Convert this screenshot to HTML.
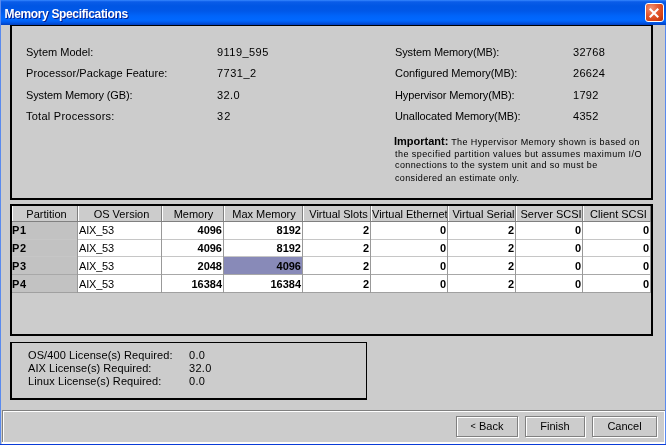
<!DOCTYPE html>
<html><head><meta charset="utf-8">
<style>
*{margin:0;padding:0;box-sizing:border-box}
html,body{width:666px;height:445px;overflow:hidden;background:#cccccc;position:relative;font-family:"Liberation Sans",sans-serif;color:#000}
body{will-change:transform}
.a{position:absolute}
.t{position:absolute;white-space:nowrap;font-size:11px;line-height:13px}
.hd{position:absolute;top:207px;height:14px;font-size:11px;line-height:14px;text-align:center;white-space:nowrap;overflow:hidden}
.td{position:absolute;font-size:11px;line-height:17px;white-space:nowrap}
.b{font-weight:bold}
.r{text-align:right}
#title{left:0;top:0;width:666px;height:25px;background:linear-gradient(#3b8cff 0px,#1a6cf2 1px,#0a5ce8 2px,#0056e4 6px,#0058e8 11px,#0064fa 16px,#0068ff 20px,#005cf0 22px,#0048d0 24px,#0040c0 25px)}
#ttext{left:4.5px;top:8px;color:#fff;font-weight:bold;font-size:12px;line-height:13px;text-shadow:1px 1px 0 #0a1e8c;letter-spacing:-0.35px}
#close{left:645px;top:3px;width:19px;height:19px;border:1px solid #fff;border-radius:3px;background:radial-gradient(circle at 30% 25%,#f39274 0,#e45a32 40%,#d44418 72%,#b02c08 100%)}
#frameL{left:0;top:0;width:1px;height:445px;background:#5a8aee}
#frameR{left:665px;top:25px;width:1px;height:420px;background:#5a8aee}
#frameB{left:0;top:444px;width:666px;height:1px;background:#0a3cd8}
#p1{left:10px;top:25px;width:643px;height:175px;border:2px solid #000;border-top-width:1px}
#p2{left:10px;top:204px;width:643px;height:132px;border:2px solid #000}
#p3{left:10px;top:342px;width:357px;height:58px;border:2px solid #000;border-top-width:1px;border-right-width:1px}
#bar{left:2px;top:410px;width:663px;height:34px;border-top:1px solid #808080;border-left:1px solid #808080;box-shadow:inset 1px 1px 0 #fff}
#barB{left:2px;top:442px;width:663px;height:2px;background:#fff}
#barR{left:664px;top:411px;width:1px;height:33px;background:#fff}
.btn{position:absolute;top:416px;height:21px;border:1px solid #808080;box-shadow:inset 1px 1px 0 #fff,1px 1px 0 #fff;font-size:11px;line-height:19px;text-align:center}
</style></head><body>
<div id="title" class="a"></div>
<div id="ttext" class="a">Memory Specifications</div>
<div id="close" class="a"><svg width="17" height="17" style="position:absolute;left:0;top:0"><path d="M4.5 5.5L11.5 12.5M11.5 5.5L4.5 12.5" stroke="#fff" stroke-width="2.1" stroke-linecap="square"/></svg></div>
<div id="frameL" class="a"></div>
<div id="frameR" class="a"></div>
<div id="p1" class="a"></div>
<div class="t" style="left:26px;top:46px;letter-spacing:0px">Sytem Model:</div>
<div class="t" style="left:26px;top:67px;letter-spacing:0.08px">Processor/Package Feature:</div>
<div class="t" style="left:26px;top:89px;letter-spacing:-0.12px">System Memory (GB):</div>
<div class="t" style="left:26px;top:110px;letter-spacing:0.25px">Total Processors:</div>
<div class="t" style="left:217px;top:46px;letter-spacing:0.45px">9119_595</div>
<div class="t" style="left:217px;top:67px;letter-spacing:0.5px">7731_2</div>
<div class="t" style="left:217px;top:89px;letter-spacing:0.4px">32.0</div>
<div class="t" style="left:217px;top:110px;letter-spacing:1.2px">32</div>
<div class="t" style="left:395px;top:46px;letter-spacing:-0.12px">System Memory(MB):</div>
<div class="t" style="left:395px;top:67px;letter-spacing:-0.05px">Configured Memory(MB):</div>
<div class="t" style="left:395px;top:89px;letter-spacing:-0.13px">Hypervisor Memory(MB):</div>
<div class="t" style="left:395px;top:110px;letter-spacing:-0.1px">Unallocated Memory(MB):</div>
<div class="t" style="left:573px;top:46px;letter-spacing:0.3px">32768</div>
<div class="t" style="left:573px;top:67px;letter-spacing:0.3px">26624</div>
<div class="t" style="left:573px;top:89px;letter-spacing:0.3px">1792</div>
<div class="t" style="left:573px;top:110px;letter-spacing:0.3px">4352</div>
<div class="t" style="left:394px;top:135px;"><b>Important:</b><span style="font-size:9px;letter-spacing:0.4px"> The Hypervisor Memory shown is based on</span></div>
<div class="t" style="left:395px;top:148px;font-size:9px;letter-spacing:0.44px">the specified partition values but assumes maximum I/O</div>
<div class="t" style="left:395px;top:159px;font-size:9px;letter-spacing:0.39px">connections to the system unit and so must be</div>
<div class="t" style="left:395px;top:172px;font-size:9px;letter-spacing:0.37px">considered an estimate only.</div>
<div class="t" style="left:28px;top:349px;letter-spacing:0.1px">OS/400 License(s) Required:</div>
<div class="t" style="left:28px;top:362px;letter-spacing:0.05px">AIX License(s) Required:</div>
<div class="t" style="left:28px;top:375px;letter-spacing:0.1px">Linux License(s) Required:</div>
<div class="t" style="left:189px;top:349px;letter-spacing:0.3px">0.0</div>
<div class="t" style="left:189px;top:362px;letter-spacing:0.3px">32.0</div>
<div class="t" style="left:189px;top:375px;letter-spacing:0.3px">0.0</div>
<div id="p2" class="a"></div>
<div class="a" style="left:12px;top:206px;width:638px;height:16px;background:#cccccc"></div>
<div class="a" style="left:12px;top:206px;width:1px;height:15px;background:#fff"></div>
<div class="a" style="left:77px;top:206px;width:1px;height:16px;background:#808080"></div>
<div class="hd" style="left:14px;width:65px">Partition</div>
<div class="a" style="left:78px;top:206px;width:1px;height:15px;background:#fff"></div>
<div class="a" style="left:161px;top:206px;width:1px;height:16px;background:#808080"></div>
<div class="hd" style="left:80px;width:83px">OS Version</div>
<div class="a" style="left:162px;top:206px;width:1px;height:15px;background:#fff"></div>
<div class="a" style="left:223px;top:206px;width:1px;height:16px;background:#808080"></div>
<div class="hd" style="left:163px;width:61px">Memory</div>
<div class="a" style="left:224px;top:206px;width:1px;height:15px;background:#fff"></div>
<div class="a" style="left:302px;top:206px;width:1px;height:16px;background:#808080"></div>
<div class="hd" style="left:225px;width:78px">Max Memory</div>
<div class="a" style="left:303px;top:206px;width:1px;height:15px;background:#fff"></div>
<div class="a" style="left:370px;top:206px;width:1px;height:16px;background:#808080"></div>
<div class="hd" style="left:305px;width:67px">Virtual Slots</div>
<div class="a" style="left:371px;top:206px;width:1px;height:15px;background:#fff"></div>
<div class="a" style="left:447px;top:206px;width:1px;height:16px;background:#808080"></div>
<div class="hd" style="left:372px;width:75px;text-align:left">Virtual Ethernet</div>
<div class="a" style="left:448px;top:206px;width:1px;height:15px;background:#fff"></div>
<div class="a" style="left:515px;top:206px;width:1px;height:16px;background:#808080"></div>
<div class="hd" style="left:450px;width:67px">Virtual Serial</div>
<div class="a" style="left:516px;top:206px;width:1px;height:15px;background:#fff"></div>
<div class="a" style="left:582px;top:206px;width:1px;height:16px;background:#808080"></div>
<div class="hd" style="left:518px;width:66px">Server SCSI</div>
<div class="a" style="left:583px;top:206px;width:1px;height:15px;background:#fff"></div>
<div class="a" style="left:650px;top:206px;width:1px;height:16px;background:#808080"></div>
<div class="hd" style="left:585px;width:67px">Client SCSI</div>
<div class="a" style="left:12px;top:221px;width:639px;height:1px;background:#808080"></div>
<div class="a" style="left:12px;top:222px;width:638px;height:70px;background:#fff"></div>
<div class="a" style="left:12px;top:222px;width:65px;height:70px;background:#c2c2c2"></div>
<div class="a" style="left:224px;top:257px;width:78px;height:17px;background:#888ab8"></div>
<div class="a" style="left:12px;top:239px;width:639px;height:1px;background:#c6c6c6"></div>
<div class="a" style="left:12px;top:256px;width:639px;height:1px;background:#c6c6c6"></div>
<div class="a" style="left:12px;top:274px;width:639px;height:1px;background:#a8a8a8"></div>
<div class="a" style="left:12px;top:292px;width:639px;height:1px;background:#a0a0a0"></div>
<div class="a" style="left:77px;top:222px;width:1px;height:71px;background:#999"></div>
<div class="a" style="left:161px;top:222px;width:1px;height:71px;background:#999"></div>
<div class="a" style="left:223px;top:222px;width:1px;height:71px;background:#999"></div>
<div class="a" style="left:302px;top:222px;width:1px;height:71px;background:#999"></div>
<div class="a" style="left:370px;top:222px;width:1px;height:71px;background:#999"></div>
<div class="a" style="left:447px;top:222px;width:1px;height:71px;background:#999"></div>
<div class="a" style="left:515px;top:222px;width:1px;height:71px;background:#999"></div>
<div class="a" style="left:582px;top:222px;width:1px;height:71px;background:#999"></div>
<div class="a" style="left:650px;top:222px;width:1px;height:71px;background:#999"></div>
<div class="td b" style="left:12px;top:222px;letter-spacing:0.6px">P1</div>
<div class="td" style="left:79px;top:222px;letter-spacing:-0.2px">AIX_53</div>
<div class="td b r" style="left:162px;width:60px;top:222px">4096</div>
<div class="td b r" style="left:224px;width:77px;top:222px">8192</div>
<div class="td b r" style="left:303px;width:66px;top:222px">2</div>
<div class="td b r" style="left:371px;width:75px;top:222px">0</div>
<div class="td b r" style="left:448px;width:66px;top:222px">2</div>
<div class="td b r" style="left:516px;width:65px;top:222px">0</div>
<div class="td b r" style="left:583px;width:66px;top:222px">0</div>
<div class="td b" style="left:12px;top:240px;letter-spacing:0.6px">P2</div>
<div class="td" style="left:79px;top:240px;letter-spacing:-0.2px">AIX_53</div>
<div class="td b r" style="left:162px;width:60px;top:240px">4096</div>
<div class="td b r" style="left:224px;width:77px;top:240px">8192</div>
<div class="td b r" style="left:303px;width:66px;top:240px">2</div>
<div class="td b r" style="left:371px;width:75px;top:240px">0</div>
<div class="td b r" style="left:448px;width:66px;top:240px">2</div>
<div class="td b r" style="left:516px;width:65px;top:240px">0</div>
<div class="td b r" style="left:583px;width:66px;top:240px">0</div>
<div class="td b" style="left:12px;top:258px;letter-spacing:0.6px">P3</div>
<div class="td" style="left:79px;top:258px;letter-spacing:-0.2px">AIX_53</div>
<div class="td b r" style="left:162px;width:60px;top:258px">2048</div>
<div class="td b r" style="left:224px;width:77px;top:258px">4096</div>
<div class="td b r" style="left:303px;width:66px;top:258px">2</div>
<div class="td b r" style="left:371px;width:75px;top:258px">0</div>
<div class="td b r" style="left:448px;width:66px;top:258px">2</div>
<div class="td b r" style="left:516px;width:65px;top:258px">0</div>
<div class="td b r" style="left:583px;width:66px;top:258px">0</div>
<div class="td b" style="left:12px;top:276px;letter-spacing:0.6px">P4</div>
<div class="td" style="left:79px;top:276px;letter-spacing:-0.2px">AIX_53</div>
<div class="td b r" style="left:162px;width:60px;top:276px">16384</div>
<div class="td b r" style="left:224px;width:77px;top:276px">16384</div>
<div class="td b r" style="left:303px;width:66px;top:276px">2</div>
<div class="td b r" style="left:371px;width:75px;top:276px">0</div>
<div class="td b r" style="left:448px;width:66px;top:276px">2</div>
<div class="td b r" style="left:516px;width:65px;top:276px">0</div>
<div class="td b r" style="left:583px;width:66px;top:276px">0</div>
<div id="p3" class="a"></div>
<div id="bar" class="a"></div>
<div id="barB" class="a"></div>
<div id="barR" class="a"></div>
<div class="btn" style="left:456px;width:62px"><span style="font-size:9px;position:relative;top:-1px">&lt;</span> Back</div>
<div class="btn" style="left:525px;width:60px">Finish</div>
<div class="btn" style="left:592px;width:65px">Cancel</div>
<div id="frameB" class="a"></div>
</body></html>
